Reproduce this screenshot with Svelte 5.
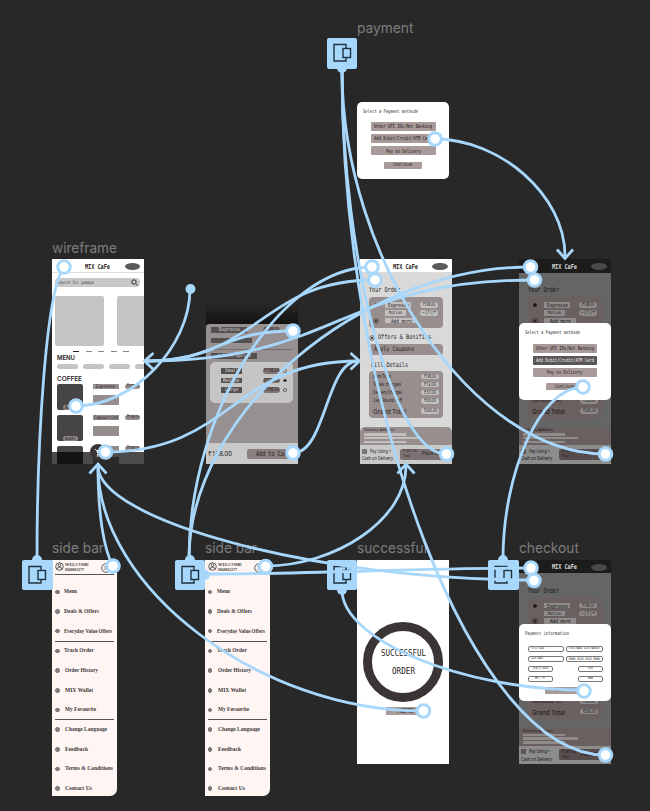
<script>
  const labels = [
    { text: 'payment', x: 357, y: 20.5, w: 56.5 },
    { text: 'wireframe', x: 52, y: 241, w: 65 },
    { text: 'side bar', x: 52, y: 541, w: 52 },
    { text: 'side bar', x: 205, y: 541, w: 52 },
    { text: 'successful', x: 357, y: 541, w: 70 },
    { text: 'checkout', x: 519, y: 541, w: 60 }
  ];

  const starts = [
    { x: 326.5, y: 38, bump: 'down' },
    { x: 22, y: 559.5, bump: 'up' },
    { x: 174.5, y: 559.5, bump: 'up', side: true },
    { x: 326.5, y: 559.5, bump: 'down' },
    { x: 488, y: 559.5, bump: 'up' }
  ];

  const wires = [
    'M342 70C342 262 475 454 605 454',
    'M342 70C342 262 394 454 446 454',
    'M342 70C342 413 474 755 605 755',
    'M435 139C500 139 565 195 565 256',
    'M76 406C133 406 190 347 190 289',
    'M105 452C232 452 232 361 358 361',
    'M293 453C326 453 326 361 358 361',
    'M293 331C218 331 218 361 146 361',
    'M375 280C260 280 260 361 146 361',
    'M372 267C280 267 189 413 189 559',
    'M534 280C339 280 339 361 146 361',
    'M530 267C360 267 189 413 189 559',
    'M64 267C46 290 37 440 37 559',
    'M113 566C104 550 98 515 98 466',
    'M423 711C260 711 98 588 98 466',
    'M534 580C316 580 98 520 98 466',
    'M205 574C314 574 422 568 531 568',
    'M265 566C335 566 406 520 406 466',
    'M342 590C342 640 463 690 584 690',
    'M503 559C503 473 540 387 583 387'
  ];

  const heads = [
    'M89.500 473.500L98 464L106.500 473.500',
    'M397.500 473.500L406 464L414.500 473.500',
    'M350.500 353L359.500 361L350.500 369.500',
    'M153.500 353L144.500 361L153.500 369.500',
    'M557 249.500L565 258.500L573 249.500'
  ];

  const rings = [
    [64, 267], [76, 406], [105.5, 452], [293, 331], [293, 453], [372, 267], [375, 280],
    [435, 139], [446.500, 454], [530.5, 267], [534.5, 280], [583, 387], [605.5, 454],
    [113, 566], [265.500, 566.500], [423.5, 711], [531, 568], [534, 580.500], [584, 691], [605.500, 755]
  ];

  const menu = [
    ['Menu', 13], ['Deals & Offers', 35], ['Everyday Value Offers', 48],
    ['Track Order', 30], ['Order History', 33], ['MIX Wallet', 28], ['My Favourite', 31],
    ['Change Language', 42], ['Feedback', 23], ['Terms & Conditions', 48], ['Contact Us', 27]
  ];

  const bill = [
    ['Item Total', 18, '₹198.00'], ['Taxes charges', 28, '₹12.00'],
    ['Delivery Charges', 29, '₹37.00'], ['Cash Round - off', 29, '₹00.00']
  ];
</script>

{#snippet t(text, w, size, kind = 'mono')}
  <svg class="t {kind}" width={w} height={size + 1} font-size={size}>
    <text x="0" y={size * 0.82} textLength={w} lengthAdjust="spacingAndGlyphs">{text}</text>
  </svg>
{/snippet}

{#snippet radio(target)}
  <svg class="radio" width="6" height="6" viewBox="0 0 6 6">
    <circle cx="3" cy="3" r={target ? 2.3 : 1.5} fill={target ? 'none' : 'currentColor'} stroke="currentColor" stroke-width=".6" />
    <circle cx="3" cy="3" r="1" fill="currentColor" />
  </svg>
{/snippet}

{#snippet header()}
  <header>{@render t('MIX CaFe', 25, 6.8, 'mono bold')}<i></i></header>
{/snippet}

{#snippet payment(selected)}
  <section class="dialog pay">
    <div class="dtitle">{@render t('Select a Payment methode', 55, 5)}</div>
    <b>{@render t('Other UPI IDs/Net Banking', 58, 5.5)}</b>
    <b class:selected>{@render t('Add Debit/Credit/ATM Card', 58, 5.5)}</b>
    <b>{@render t('Pay on Delivery', 35, 5.5)}</b>
    <b class="go">{@render t('Continue', 19, 5.2)}</b>
  </section>
{/snippet}

{#snippet information()}
  <section class="dialog info">
    <div class="dtitle">{@render t('Payment information', 44, 5)}</div>
    <div class="fields">
      <u>{@render t('First name', 13, 3)}</u><u class="c">{@render t('CVV2/Name Card Number', 31, 3)}</u>
      <u>{@render t('Last Name', 12, 3)}</u><u class="c">{@render t('MONX 0XXX 0XXX M0NX', 31, 3.5)}</u>
    </div>
    <div class="fields small">
      <u>{@render t('Expiry Date', 15, 3)}</u><u>{@render t('CVV', 5, 3)}</u>
      <u>{@render t('MM / YY', 10, 3)}</u><u>{@render t('000', 5, 3)}</u>
    </div>
    <b class="add">{@render t('Add your Card', 24, 3.5)}</b>
  </section>
{/snippet}

{#snippet cart(dim)}
  <div class="cart" class:dim>
    {@render header()}
    <div class="h your">{@render t('Your Order', 31, 7)}</div>
    <section class="order">
      {@render radio(false)}<span class="tag w26">{@render t('Espresso', 21, 5.5)}</span><em>{@render t('₹198.00', 12, 4.5, 'sans')}</em>
      <s></s><span class="tag w21">{@render t('Motion', 13, 4.5)}</span><em>{@render t('−|1|+', 14, 5, 'sans')}</em>
      {@render radio(true)}<span class="tag w32">{@render t('Add more', 21, 5.5)}</span><s></s>
    </section>
    <div class="offers">{@render radio(true)}{@render t('Offers & Benifits', 53, 6.5)}</div>
    <section class="coupon">{@render t('Apply Coupons', 40, 6.5)}</section>
    <div class="h details">{@render t('Bill Details', 37, 6.5)}</div>
    <section class="bill">
      {#each bill as [name, w, price]}
        <p>{@render t(name, w, 4.5, 'sans')}<em>{@render t(price, 12, 4.5, 'sans')}</em></p>
      {/each}
      <p class="grand">{@render t('Grand Total', 33, 6.8, 'sans')}<em>{@render t('₹260.00', 13, 4.5, 'sans')}</em></p>
    </section>
    <section class="address">{@render t('Delivery Address', 30, 4, 'sans')}<i></i><i class="long"></i><i></i></section>
    <footer>
      <div>
        <p><q></q>{@render t('Pay Using ^', 21, 5, 'sans')}</p>
        {@render t('Cash on Delivery', 31, 5, 'sans')}
      </div>
      <strong><span>{@render t('₹ 301.00', 14, 4, 'sans')}{@render t('Total', 7, 4, 'sans')}</span>{@render t('Place Order', 25, 5, 'sans')}</strong>
    </footer>
  </div>
{/snippet}

{#snippet sidebar()}
  <nav>
    <div class="who">
      <svg width="9" height="9" viewBox="0 0 9 9" fill="none" stroke="#333" stroke-width=".8"><circle cx="4.500" cy="4.500" r="3.800" /><circle cx="4.500" cy="3.300" r="1.300" /><path d="M2 7.300Q2.300 5 4.500 5T7 7.300" /></svg>
      <div>{@render t('WELCOME', 24, 4.8, 'serif')}{@render t('8848805277', 19, 3.5, 'serif')}</div>
      <svg class="close" width="10" height="10" viewBox="0 0 10 10" fill="none" stroke="#333" stroke-width=".8"><circle cx="5" cy="5" r="4.300" /><path d="M3.300 3.300L6.700 6.700M6.700 3.300L3.300 6.700" /></svg>
    </div>
    <ul>
      {#each menu as [name, w], i}
        <li class:rule={i === 3 || i === 7} class:in={i > 3}><i></i>{@render t(name, w, 6.2, 'serif')}</li>
      {/each}
    </ul>
  </nav>
{/snippet}

<main>
  {#each labels as l}
    <div class="label" style="left:{l.x}px;top:{l.y}px">{@render t(l.text, l.w, 14.5, 'title')}</div>
  {/each}

  <div class="frame f-pay">{@render payment(false)}</div>

  <div class="frame f-wire">
    {@render header()}
    <div class="search">{@render t('Search for yummys', 37, 4.5)}
      <svg width="7" height="7" viewBox="0 0 7 7" fill="none" stroke="#333"><circle cx="3" cy="3" r="2.200" /><path d="M4.700 4.700L6.600 6.600" /></svg>
    </div>
    <div class="banners"><i></i><i></i></div>
    <div class="dashes"><i></i><i></i><i></i><i></i><i></i></div>
    <div class="cap">{@render t('MENU', 18, 6, 'inter')}</div>
    <div class="pills"><i></i><i></i><i></i><i></i></div>
    <div class="cap coffee">{@render t('COFFEE', 25, 6, 'inter')}</div>
    <div class="list">
      {#each ['Espresso', 'Cappuccino', 'Latte'] as name}
        <div class="item">
          <span class="pic"><em>{@render t('Add+', 11, 4.5)}</em></span>
          <span class="desc"><b>{@render t(name, name.length * 2.4, 4.800)}</b><i></i></span>
          <em class="cost">{@render t('₹198.00', 12, 4, 'sans')}</em>
        </div>
      {/each}
    </div>
    <div class="tabs"></div>
    <div class="fab"><svg width="9" height="9" viewBox="0 0 9 9" fill="#fff"><path d="M0 1H2L3 5H7L8 2H3M3 6H7V7H3Z" /><circle cx="3.500" cy="8" r=".8" /><circle cx="6.500" cy="8" r=".8" /></svg></div>
  </div>

  <div class="frame f-item">
    <div class="fade"></div>
    <div class="sheet">
      <div class="top"><span class="ink w36">{@render t('Espresso', 21, 5)}</span><span class="price">{@render t('₹198.00', 15, 4.5, 'sans')}</span></div>
      <div class="ink w41"></div>
      <hr />
      <div class="ink w46">{@render t('Select option', 33, 4.5)}</div>
      <section>
        {#each ['Small', 'Medium', 'Large'] as size, i}
          <p><span class="ink">{@render t(size, size.length * 2.7, 5)}</span><em class="price">{@render t('₹198.00', 15, 4.5, 'sans')}</em><i class:on={i === 1}></i></p>
        {/each}
      </section>
      <div class="buy">{@render t('₹198.00', 24, 7, 'sans')}<b>{@render t('Add to Cart', 34, 7)}</b></div>
    </div>
  </div>

  <div class="frame f-cart">{@render cart(false)}</div>
  <div class="frame f-choose">{@render cart(true)}<div class="over">{@render payment(true)}</div></div>
  <div class="frame f-check">{@render cart(true)}<div class="over">{@render information()}</div></div>
  <div class="frame f-side">{@render sidebar()}</div>
  <div class="frame f-side two">{@render sidebar()}</div>

  <div class="frame f-done">
    <div class="ring">{@render t('SUCCESSFUL', 45, 8.5)}{@render t('ORDER', 23, 8.5)}</div>
    <b class="home">{@render t('HOME', 17, 7)}</b>
  </div>

  {#each starts as s}
    <div class="start {s.bump}" class:side={s.side} style="left:{s.x}px;top:{s.y}px">
      <svg width="20" height="20" viewBox="0 0 20 20" fill="none" stroke="#20323f" stroke-width="1.400"><path d="M14 5.500V1.500H2V18H14V14.500" /><rect x="11" y="5.500" width="7.500" height="9" /></svg>
    </div>
  {/each}

  <svg class="wires" width="650" height="811" viewBox="0 0 650 811">
    {#each wires as d}<path {d} />{/each}
    {#each heads as d}<path {d} />{/each}
    <circle class="dot" cx="190.500" cy="289" r="5" />
    {#each rings as [x, y]}<circle cx={x} cy={y} r="6.300" />{/each}
  </svg>
</main>

<style>
  :global(body) { margin: 0; background: #282828; }
  main { position: relative; width: 650px; height: 811px; overflow: hidden; background: #282828; line-height: 0; color: #262222; }
  main :global(*) { box-sizing: border-box; }
  .t { display: block; overflow: visible; flex: none; fill: currentColor; }
  .mono { font-family: "DejaVu Sans Mono", monospace; }
  .bold { font-weight: 700; }
  .sans { font-family: "Noto Sans", sans-serif; }
  .serif { font-family: "Liberation Serif", serif; font-weight: 700; color: #3c3838; }
  .title, .inter { font-family: Inter, sans-serif; }
  .inter { font-weight: 600; }
  .label { position: absolute; color: #7c7c7c; }
  .frame { position: absolute; width: 92px; overflow: hidden; }
  p { margin: 0; }
  i, em, b, u, s, q { display: block; font-style: normal; text-decoration: none; font-weight: 400; }
  q::before, q::after { content: none; }

  header { height: 13.5px; flex: none; display: flex; align-items: center; padding: 2.500px 4px 0 33px; justify-content: space-between; background: #fff; border-bottom: 1px solid #ddd; }
  header i { width: 15.500px; height: 7px; border-radius: 50%; background: #5a5a5a; }

  .f-pay { left: 357px; top: 101.5px; height: 77px; }
  .dialog { width: 92px; height: 77px; background: #fff; border-radius: 5px; padding: 7px 0 0 6px; }
  .dialog b { display: flex; align-items: center; justify-content: center; background: #a89b9a; width: 64.500px; height: 9px; margin: 0 0 3.200px 8px; border-radius: 1px; }
  .pay .dtitle { height: 13.5px; }
  .dialog b.selected { background: #5a5655; color: #eee; }
  .dialog b.go { width: 37.500px; height: 7px; margin: 6.500px 0 0 21px; }
  .info { padding-left: 6px; }
  .info .dtitle { height: 15px; }
  .fields { display: grid; grid-template-columns: 36px 37px; gap: 3.500px 2px; margin-left: 3px; }
  .fields.small { grid-template-columns: 25px 25px; column-gap: 25px; margin-top: 4px; }
  .fields u { height: 6.500px; border: .8px solid #777; border-radius: 2px; display: flex; align-items: center; padding-left: 2px; }
  .fields u.c, .small u { justify-content: center; padding: 0; }
  .small u { height: 6px; }
  .dialog b.add { width: 43px; height: 7.500px; margin: 5px 0 0 20px; }

  .f-wire { left: 52px; top: 259px; height: 204.500px; background: #fff; }
  .search { display: flex; justify-content: space-between; align-items: center; margin: 5.500px 4px 0 2.500px; height: 9px; padding: 0 2.500px; border-radius: 4px; background: #c8c8c8; color: #444; }
  .banners { display: flex; gap: 12.500px; margin: 9px 0 0 2.500px; }
  .banners i { flex: none; width: 49.500px; height: 49.500px; border-radius: 2px; background: #c4c4c4; }
  .dashes { display: flex; gap: 6.500px; margin: 5.500px 0 0 21px; }
  .dashes i { width: 6px; height: 1px; background: #888; }
  .dashes i:first-child { background: #222; }
  .cap { margin: 3px 0 0 5px; }
  .pills { display: flex; gap: 5.500px; margin: 2px 0 0 5px; }
  .pills i { flex: none; width: 20.500px; height: 5px; border-radius: 3px; background: #c4c4c4; }
  .cap.coffee { margin-top: 6.500px; }
  .list { margin: 1.500px 4px 0 5px; display: grid; gap: 5.500px; }
  .item { height: 25.500px; display: flex; justify-content: space-between; }
  .pic { width: 26px; height: 25.500px; background: #474445; border-radius: 2px; display: flex; align-items: end; justify-content: center; }
  .pic em { background: #8c8585; width: 15px; border-radius: 3px; padding-left: 2px; height: 5px; }
  .desc { width: 26px; margin-right: auto; margin-left: 10px; }
  .desc b { height: 5px; background: #968d8d; display: flex; justify-content: center; }
  .desc i { height: 10px; background: #968d8d; margin-top: 6px; }
  .cost { width: 15px; height: 5px; border-radius: 3px; background: #968d8d; padding-left: 1.500px; }
  .tabs { position: absolute; left: 0; right: 0; bottom: 0; height: 12px; background: rgba(0, 0, 0, .7); }
  .fab { position: absolute; left: 38px; top: 185px; width: 16px; height: 16px; border-radius: 50%; background: #3b3536; display: flex; align-items: center; justify-content: center; }

  .f-item { left: 206px; top: 304px; height: 160px; }
  .fade { height: 20px; background: linear-gradient(#282828, #121212); }
  .sheet { height: 140px; border-radius: 4px 4px 0 0; background: #969090; display: flex; flex-direction: column; padding: 3px 0 0 5px; }
  .ink { background: #545050; color: #ddd; height: 5.500px; display: flex; justify-content: center; }
  .w36 { width: 36px; }
  .w41 { width: 41px; margin-top: 5px; }
  .w46 { width: 46px; }
  .top { display: flex; gap: 16px; }
  .price { background: #807474; border-radius: 3px; width: 17px; height: 5.500px; padding-left: 1px; }
  hr { width: 82px; margin: 6px 0 3px; border: 0; border-top: 1px solid #777070; }
  .sheet section { width: 83px; height: 41px; margin: 3px 0 0 -1px; padding: 6.500px 0 0 11px; border-radius: 5px; background: #c6c5c5; display: flex; flex-direction: column; gap: 4.200px; }
  .sheet p { display: flex; align-items: center; }
  .sheet p .ink { width: 21px; margin-right: 21px; }
  .sheet p i { width: 3.500px; height: 3.500px; margin-left: 3px; border: .5px solid #555; border-radius: 50%; }
  .sheet p i.on { background: #111; }
  .buy { margin: auto 0 0 -5px; height: 21px; background: #c9c9c9; display: flex; align-items: center; padding: 0 5px 0 2px; justify-content: space-between; }
  .buy b { width: 46px; height: 10px; border-radius: 2px; background: #8b7f7f; display: flex; align-items: center; padding-left: 9px; }

  .f-cart { left: 359.500px; top: 259px; height: 204.500px; }
  .f-choose { left: 518.500px; top: 259px; height: 204.500px; }
  .f-check { left: 518.500px; top: 559.500px; height: 204.500px; }
  .over { position: absolute; left: 0; top: 64px; }
  .cart { --card: #988e8e; --pill: #c2bfbf; background: #d9d9d9; height: 204.500px; }
  .cart.dim { --card: #6a6060; --pill: #8f8b8b; background: #656565; color: #171414; }
  .dim header { background: #1c1c1c; border-color: #1c1c1c; color: #ddd; }
  .dim header i { background: #4a4a4a; }
  .your { margin: 13.500px 0 0 9.500px; height: 11px; }
  .cart section { background: var(--card); }
  .cart em { background: var(--pill); width: 18px; height: 5.500px; border-radius: 3px; display: flex; justify-content: center; }
  .order { width: 74px; height: 31px; margin-left: 9.500px; border-radius: 4px; padding: 5px 0 0 4px; display: grid; grid-template-columns: 12px 35px 18px; gap: 2.200px 0; align-content: start; }
  .tag { height: 5.500px; background: var(--pill); display: flex; justify-content: center; }
  .w26 { width: 26px; }
  .w21 { width: 21px; }
  .w32 { width: 32px; }
  .offers { display: flex; align-items: center; gap: 3px; margin: 5.500px 0 0 9.500px; height: 8px; }
  .coupon { width: 74px; height: 10.500px; border-radius: 4px; margin: 2.500px 0 0 9.500px; padding: 2px 0 0 5px; }
  .details { margin: 7.500px 0 0 11.500px; height: 9px; }
  .bill { width: 74px; height: 47px; border-radius: 4px; margin-left: 9.500px; padding: 2.500px 4px 0; }
  .bill p { display: flex; justify-content: space-between; height: 8.200px; }
  .bill .grand { padding-top: 2px; }
  .address { height: 18px; margin-top: 9px; padding: 1px 0 0 4px; border-radius: 5px 5px 0 0; }
  .address i { width: 42px; height: 2.500px; margin-bottom: 1.300px; background: var(--pill); }
  .address i.long { width: 55px; }
  footer { height: 18.500px; background: #c9c9c9; display: flex; justify-content: space-between; padding: 3.500px 3px 0 2.500px; }
  .dim footer { background: #8c8c8c; }
  footer p { display: flex; gap: 3px; margin-bottom: 1.500px; }
  footer q { width: 5px; height: 5px; background: #777; }
  .dim q { background: #5a5656; }
  footer strong { width: 49px; height: 11px; border-radius: 2px; background: #7d7273; display: flex; align-items: center; gap: 5px; padding-left: 3px; font-weight: 400; overflow: hidden; }
  .dim strong { background: #574d4e; }

  .f-side { left: 52px; top: 559.500px; width: 65px; height: 236.500px; }
  .two { left: 204.500px; }
  nav { height: 236.500px; background: #fff6f4; border-radius: 0 0 7px 0; padding: 0 3px; }
  .who { height: 15.500px; border-bottom: 1px solid #555; display: flex; gap: 1px; padding-top: 2.500px; }
  .who .close { margin: 1px 3px 0 auto; }
  ul { margin: 0; padding: 6.500px 0 0; list-style: none; }
  li { height: 19.700px; display: flex; align-items: center; gap: 4.500px; border-top: 1px solid transparent; }
  li.rule { border-top-color: #555; }
  li.in { gap: 5.500px; }
  li > i { width: 4.500px; height: 4.500px; border-radius: 50%; background: #808080; border: 1px solid #777; flex: none; }

  .f-done { left: 357px; top: 559.500px; height: 204.500px; background: #fff; display: flex; flex-direction: column; align-items: center; padding-top: 62.500px; }
  .ring { width: 80px; height: 80px; flex: none; border: 9px solid #3a3435; border-radius: 50%; display: flex; flex-direction: column; align-items: center; gap: 8.500px; padding-top: 18px; }
  .home { width: 38px; height: 7.500px; margin: 5px 0 0 4px; background: #a89b9a; display: flex; justify-content: center; }

  .start { position: absolute; width: 30.500px; height: 30.500px; border-radius: 2px; background: #a8d7fc; display: flex; align-items: center; justify-content: center; }
  .start::before { content: ""; position: absolute; left: 10px; width: 10px; height: 10px; border-radius: 50%; background: #a8d7fc; }
  .start.up::before { top: -4.500px; }
  .start.down::before { bottom: -4.500px; }
  .side::after { content: ""; position: absolute; right: -4.500px; top: 10px; width: 10px; height: 10px; border-radius: 50%; background: #a8d7fc; }
  .wires { position: absolute; left: 0; top: 0; fill: none; stroke: #a8d7fc; stroke-width: 2.800; }
  .wires circle { fill: #fff; stroke-width: 3; }
  .wires .dot { fill: #a8d7fc; stroke: none; }
</style>
